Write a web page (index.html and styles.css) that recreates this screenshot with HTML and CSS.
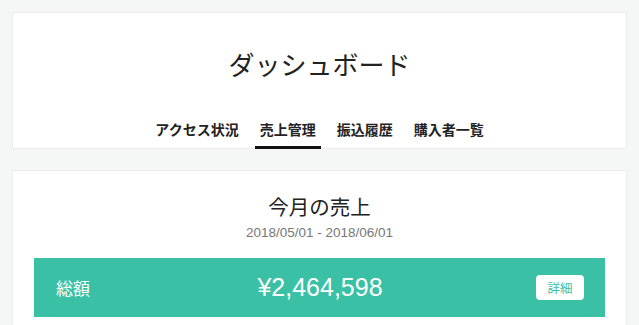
FILE: index.html
```html
<!DOCTYPE html>
<html lang="ja">
<head>
<meta charset="utf-8">
<link rel="stylesheet" href="styles.css">
</head>
<body>
<div class="page">
  <header class="card header-card">
    <h1 class="page-title">ダッシュボード</h1>
    <nav class="tabs">
      <a class="tab">アクセス状況</a>
      <a class="tab active">売上管理</a>
      <a class="tab">振込履歴</a>
      <a class="tab">購入者一覧</a>
    </nav>
  </header>
  <section class="card sales-card">
    <h2 class="sales-title">今月の売上</h2>
    <p class="sales-range">2018/05/01 - 2018/06/01</p>
    <div class="total-bar">
      <span class="total-label">総額</span>
      <span class="total-amount">¥2,464,598</span>
      <button class="detail-btn">詳細</button>
    </div>
  </section>
</div>
</body>
</html>
```
FILE: styles.css
```css
* { box-sizing: border-box; }
html, body { margin: 0; padding: 0; }
body {
  background: #f4f7f6;
  font-family: "Liberation Sans", "Noto Sans CJK JP", sans-serif;
  color: #222;
  overflow: hidden;
}
.page {
  padding: 12px 12px 0 12px;
  display: flex;
  flex-direction: column;
  gap: 21px;
}
.card {
  background: #fff;
  border: 1px solid #e8ecea;
}
.header-card {
  display: flex;
  flex-direction: column;
  align-items: center;
  padding-top: 36px;
}
.page-title {
  margin: 0;
  font-size: 26px;
  font-weight: 400;
  line-height: 35px;
  color: #222;
}
.tabs {
  display: flex;
  gap: 11px;
  margin-top: 36px;
}
.tab {
  font-size: 14px;
  font-weight: 700;
  line-height: 20px;
  padding: 0 5px 6px;
  border-bottom: 3px solid transparent;
  color: #222;
  margin-bottom: -1px;
}
.tab.active { border-bottom-color: #111; }
.sales-card {
  padding: 23px 21px 40px;
  display: flex;
  flex-direction: column;
  align-items: center;
}
.sales-title {
  margin: 0;
  font-size: 20.5px;
  font-weight: 400;
  line-height: 28px;
}
.sales-range {
  margin: 2px 0 0;
  font-size: 13.5px;
  line-height: 18px;
  color: #777;
}
.total-bar {
  margin-top: 16px;
  align-self: stretch;
  height: 59px;
  background: #3ac1a5;
  color: #fff;
  display: flex;
  align-items: center;
  justify-content: space-between;
  padding: 0 21px 0 22px;
}
.total-label {
  font-size: 17px;
  width: 60px;
}
.total-amount {
  font-size: 25px;
}
.detail-btn {
  width: 48px;
  height: 25px;
  margin-left: 12px;
  background: #fff;
  border: none;
  border-radius: 4px;
  color: #3ac1a5;
  font-family: "Liberation Sans", "Noto Sans CJK JP", sans-serif;
  font-size: 12.5px;
  padding: 0;
}
```
